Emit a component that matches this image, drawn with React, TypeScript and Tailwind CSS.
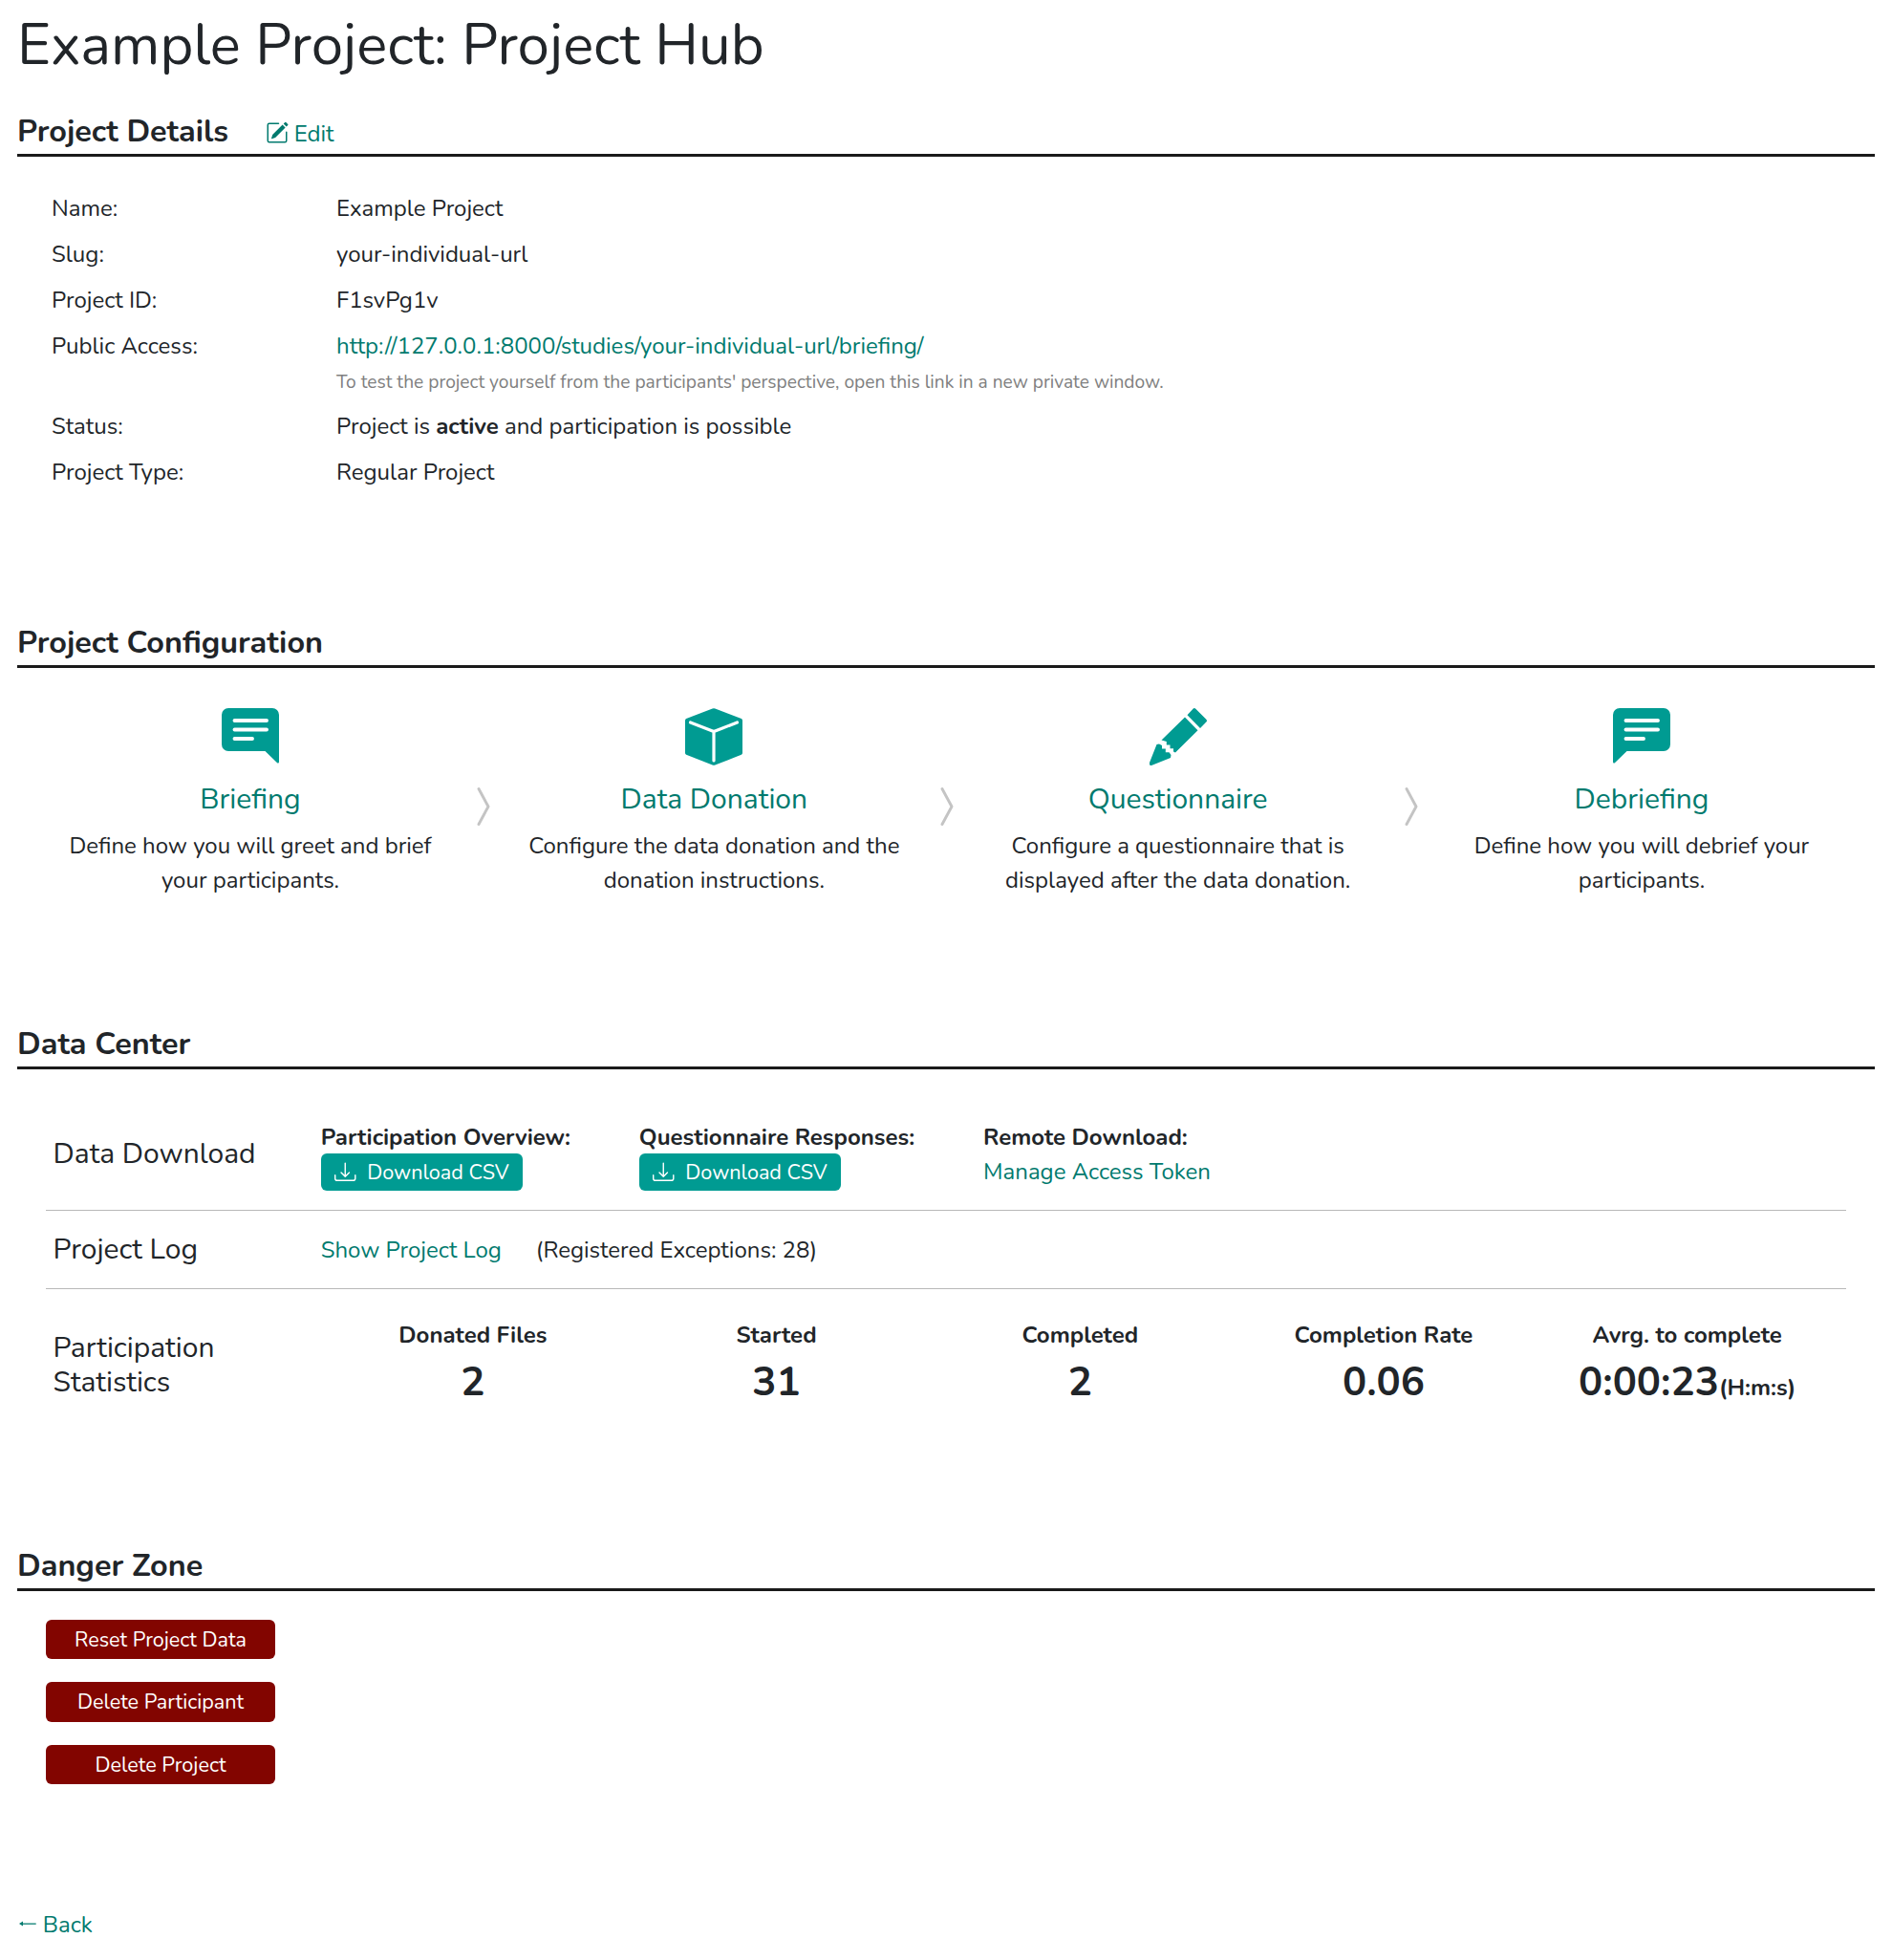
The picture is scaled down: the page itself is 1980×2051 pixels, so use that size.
import React from "react";
import { BsDownload, BsPencilSquare } from "react-icons/bs";

const link = "text-[#007a6e]";

function SectionTitle({ children }: { children: React.ReactNode }) {
  return (
    <div className="flex h-[46px] items-baseline border-b-[3px] border-[#1a1a1a] leading-[38.9px]">
      {children}
    </div>
  );
}

function Title({ children }: { children: React.ReactNode }) {
  return <h2 className="text-[32.4px] leading-[38.9px] font-bold">{children}</h2>;
}

function Row({ label, children }: { label: string; children: React.ReactNode }) {
  return (
    <div className="flex py-1.5">
      <div className="w-[298px]">{label}</div>
      <div>{children}</div>
    </div>
  );
}

function BubbleIcon({ flipped = false }: { flipped?: boolean }) {
  return (
    <svg viewBox="0 0 60 60" className="h-[60px] w-[60px]">
      <path
        d="M7 0H53a7 7 0 0 1 7 7V56c0 1.6-1.2 2-2.2 1L45.500 45H7a7 7 0 0 1-7-7V7a7 7 0 0 1 7-7z"
        transform={flipped ? "translate(60 0) scale(-1 1)" : undefined}
        fill="#009b92"
      />
      <path d="M13.500 13H47M13.500 22.500H47M13.500 32H32" stroke="#fff" strokeWidth="3.900" strokeLinecap="round" />
    </svg>
  );
}

function BoxIcon() {
  return (
    <svg viewBox="0 0 60 60" className="h-[60px] w-[60px]">
      <path
        d="M28.600 .5a4 4 0 0 1 2.800 0L58.800 11a2 2 0 0 1 1.200 1.800V47a2 2 0 0 1-1.200 1.800L31.400 59.500a4 4 0 0 1-2.800 0L1.200 48.800A2 2 0 0 1 0 47V12.800A2 2 0 0 1 1.200 11z"
        fill="#009b92"
      />
      <path d="M5.500 15L30 24.500L54.500 15M30 24.500V55" stroke="#fff" strokeWidth="3.200" strokeLinecap="round" fill="none" />
    </svg>
  );
}

function PencilIcon() {
  return (
    <svg viewBox="0 0 60 60" className="h-[60px] w-[60px]" fill="#009b92">
      <path d="M45.500 .8a2 2 0 0 1 2.800 0L59.300 11.800a2 2 0 0 1 0 2.800L53 21L39.500 7.200z" />
      <path d="M37 9.500L50.500 23.300L27 46.500L25 45.500V42.300H21.500V38.500H17.800V35L12.500 33.500z" />
      <path d="M7.500 38L10 37.500L13 39V42.500H16.800V46.200H20.500L22.500 49L22 52L2 60H.8L0 59V57z" />
    </svg>
  );
}

function BackArrow() {
  return (
    <svg viewBox="0 0 20.500 18" className="inline-block h-[18px] w-[20.500px] align-baseline" fill="currentColor">
      <path d="M2 9L6 6.500V8.400H19.700V9.700H6V11.500z" />
    </svg>
  );
}

function Step({ icon, title, lines }: { icon: React.ReactNode; title: string; lines: string[] }) {
  return (
    <div className="flex w-[428px] flex-col items-center">
      {icon}
      <div className={`mt-4 text-[30px] leading-10 ${link}`}>{title}</div>
      <div className="mt-2.5 text-center">
        {lines.map((l) => (
          <div key={l} className="whitespace-nowrap">{l}</div>
        ))}
      </div>
    </div>
  );
}

function Chevron() {
  return (
    <div className="flex flex-1 justify-center pt-[83px] pl-[3px]">
      <svg viewBox="0 0 14 40" className="h-10 w-3.5" fill="none" stroke="#c4c4c4" strokeWidth="2.900" strokeLinecap="round" strokeLinejoin="round">
        <path d="M2 1.500L12 20L2 38.500" />
      </svg>
    </div>
  );
}

function DownloadButton() {
  return (
    <button className="flex h-[39px] w-[211px] items-center rounded-md bg-[#009b92] pl-[14.500px] text-[21.6px] leading-8 text-white">
      <BsDownload className="mr-[11.500px] size-[22.500px]" />
      Download CSV
    </button>
  );
}

function Stat({ label, value, unit }: { label: string; value: string; unit?: string }) {
  return (
    <div className="flex-1 text-center font-bold">
      <div>{label}</div>
      <div className="whitespace-nowrap text-[42px] leading-[63px]">
        {value}
        {unit && <span className="text-2xl leading-none">{unit}</span>}
      </div>
    </div>
  );
}

function DangerButton({ children }: { children: React.ReactNode }) {
  return (
    <button className="flex h-[41.400px] w-60 items-center justify-center rounded-md bg-[#820500] text-[21.600px] text-white">
      {children}
    </button>
  );
}

export default function App() {
  return (
    <div className="h-[2051px] bg-white px-[18px] pt-[11px] font-[Nunito,Lato,sans-serif] text-2xl leading-9 text-[#212529]">
      <h1 className="text-[60px] leading-[72px]">Example Project: Project Hub</h1>

      <section className="mt-[35px] h-[535px]">
        <SectionTitle>
          <Title>Project Details</Title>
          <a className={`ml-[39.200px] flex items-baseline ${link}`}>
            <BsPencilSquare className="mr-[5.500px] size-6 translate-y-[3px]" />
            Edit
          </a>
        </SectionTitle>
        <div className="pt-[30px] pl-9">
          <Row label="Name:">Example Project</Row>
          <Row label="Slug:">your-individual-url</Row>
          <Row label="Project ID:">F1svPg1v</Row>
          <Row label="Public Access:">
            <a className={link}>http://127.0.0.1:8000/studies/your-individual-url/briefing/</a>
            <div className="h-9">
              <span className="text-[19.200px] text-[#808080]">
                To test the project yourself from the participants' perspective, open this link in a new private window.
              </span>
            </div>
          </Row>
          <Row label="Status:">
            Project is <b className="font-bold">active</b> and participation is possible
          </Row>
          <Row label="Project Type:">Regular Project</Row>
        </div>
      </section>

      <section className="h-[420px]">
        <SectionTitle>
          <Title>Project Configuration</Title>
        </SectionTitle>
        <div className="flex px-[30px] pt-[42px]">
          <Step icon={<BubbleIcon />} title="Briefing" lines={["Define how you will greet and brief", "your participants."]} />
          <Chevron />
          <Step icon={<BoxIcon />} title="Data Donation" lines={["Configure the data donation and the", "donation instructions."]} />
          <Chevron />
          <Step icon={<PencilIcon />} title="Questionnaire" lines={["Configure a questionnaire that is", "displayed after the data donation."]} />
          <Chevron />
          <Step icon={<BubbleIcon flipped />} title="Debriefing" lines={["Define how you will debrief your", "participants."]} />
        </div>
      </section>

      <section className="h-[546px]">
        <SectionTitle>
          <Title>Data Center</Title>
        </SectionTitle>
        <div className="px-[30px] pt-[37px]">
          <div className="flex h-[111px] items-center border-b border-[#b8b8b8] pb-1 pl-[7.500px]">
            <div className="w-[280.200px] pb-0.5 text-[30px]">Data Download</div>
            <div className="flex gap-[71.800px] font-bold">
              <div>
                <div className="h-[35px]">Participation Overview:</div>
                <div className="font-normal"><DownloadButton /></div>
              </div>
              <div>
                <div className="h-[35px]">Questionnaire Responses:</div>
                <div className="font-normal"><DownloadButton /></div>
              </div>
              <div>
                <div>Remote Download:</div>
                <a className={`font-normal ${link}`}>Manage Access Token</a>
              </div>
            </div>
          </div>
          <div className="flex h-[82px] items-center border-b border-[#b8b8b8] pl-[7.500px]">
            <div className="w-[280.200px] text-[30px]">Project Log</div>
            <a className={`mr-9 ${link}`}>Show Project Log</a>
            <span>(Registered Exceptions: 28)</span>
          </div>
          <div className="flex pt-[30px] pl-[7.500px]">
            <div className="w-[280.500px] pt-3.5 text-[30px]">
              Participation
              <br />
              Statistics
            </div>
            <div className="mr-[7.500px] flex flex-1">
              <Stat label="Donated Files" value="2" />
              <Stat label="Started" value="31" />
              <Stat label="Completed" value="2" />
              <Stat label="Completion Rate" value="0.06" />
              <Stat label="Avrg. to complete" value="0:00:23" unit="(H:m:s)" />
            </div>
          </div>
        </div>
      </section>

      <section className="h-[377px]">
        <SectionTitle>
          <Title>Danger Zone</Title>
        </SectionTitle>
        <div className="flex flex-col gap-[24.060px] pt-[30px] pl-[30px]">
          <DangerButton>Reset Project Data</DangerButton>
          <DangerButton>Delete Participant</DangerButton>
          <DangerButton>Delete Project</DangerButton>
        </div>
      </section>

      <a className={link}>
        <BackArrow /> Back
      </a>
    </div>
  );
}
